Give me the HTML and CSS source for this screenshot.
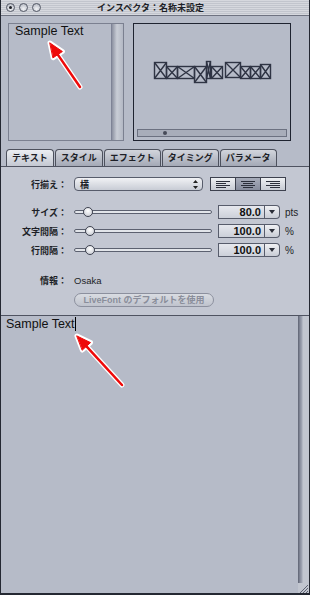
FILE: index.html
```html
<!DOCTYPE html>
<html lang="ja">
    <head>
        <meta charset="UTF-8">
        <meta name="viewport" content="width=device-width, initial-scale=1.0">
        <title>インスペクタ</title>

        <link rel="stylesheet" href="styles.css">
    </head>

    <body>
        <div class="window">
            <div class="titlebar">
                <div class="lights">
                    <span class="light dot"></span>
                    <span class="light"></span>
                    <span class="light"></span>
                </div>
                <div class="title">インスペクタ：名称未設定</div>
                <div></div>
            </div>

            <div class="top">
                <div class="sample">
                    <div class="sample-text">Sample Text</div>
                    <div class="vscroll"></div>
                </div>
                <div class="preview">
                    <svg class="glyphs" width="156" height="100" viewBox="0 0 156 100">
                        <g fill="none" stroke="#2f3444" stroke-width="1.4">
                            <rect x="20.5" y="38.5" width="12" height="16"/><path d="M20.5 38.5L32.5 54.5M32.5 38.5L20.5 54.5"/>
                            <rect x="32.5" y="42.5" width="11" height="12"/><path d="M32.5 42.5L43.5 54.5M43.5 42.5L32.5 54.5"/>
                            <rect x="43.5" y="42.5" width="17" height="12"/><path d="M43.5 42.5L60.5 54.5M60.5 42.5L43.5 54.5"/>
                            <rect x="60.5" y="42.5" width="12" height="16"/><path d="M60.5 42.5L72.5 58.5M72.5 42.5L60.5 58.5"/>
                            <rect x="72.5" y="37.5" width="4" height="17"/><path d="M72.5 37.5L76.5 54.5M76.5 37.5L72.5 54.5"/>
                            <rect x="77.5" y="42.5" width="11" height="12"/><path d="M77.5 42.5L88.5 54.5M88.5 42.5L77.5 54.5"/>
                            <rect x="91.5" y="38.5" width="15" height="15"/><path d="M91.5 38.5L106.5 53.5M106.5 38.5L91.5 53.5"/>
                            <rect x="106.5" y="42.5" width="10" height="12"/><path d="M106.5 42.5L116.5 54.5M116.5 42.5L106.5 54.5"/>
                            <rect x="116.5" y="42.5" width="10" height="12"/><path d="M116.5 42.5L126.5 54.5M126.5 42.5L116.5 54.5"/>
                            <rect x="126.5" y="40.5" width="10" height="14"/><path d="M126.5 40.5L136.5 54.5M136.5 40.5L126.5 54.5"/>
                        </g>
                    </svg>
                    <div class="hscroll"><span class="hdot"></span></div>
                </div>
            </div>

            <div class="tabs">
                <div class="tab active">テキスト</div>
                <div class="tab">スタイル</div>
                <div class="tab">エフェクト</div>
                <div class="tab">タイミング</div>
                <div class="tab">パラメータ</div>
            </div>

            <div class="panel">
                <div class="row first">
                    <div class="label">行揃え：</div>
                    <div class="popup">
                        <span>横</span>
                        <svg width="5" height="9" viewBox="0 0 5 9"><path d="M2.5 0L5 3H0Z M2.5 9L5 6H0Z" fill="#222"/></svg>
                    </div>
                    <div class="seg">
                        <div class="seg-btn">
                            <svg width="24" height="12" viewBox="0 0 24 12"><path d="M5 3.5H19M5 5.5H15M5 7.5H19M5 9.5H15" stroke="#2a2e3a"/></svg>
                        </div>
                        <div class="seg-btn on">
                            <svg width="24" height="12" viewBox="0 0 24 12"><path d="M5 3.5H19M7 5.5H17M5 7.5H19M7 9.5H17" stroke="#2a2e3a"/></svg>
                        </div>
                        <div class="seg-btn">
                            <svg width="24" height="12" viewBox="0 0 24 12"><path d="M5 3.5H19M9 5.5H19M5 7.5H19M9 9.5H19" stroke="#2a2e3a"/></svg>
                        </div>
                    </div>
                </div>

                <div class="row size">
                    <div class="label">サイズ：</div>
                    <div class="slider"><div class="track"></div><span class="knob k1"></span></div>
                    <div class="field">80.0</div>
                    <div class="dd"><svg width="6" height="4" viewBox="0 0 6 4"><path d="M0 0H6L3 4Z" fill="#2a2d38"/></svg></div>
                    <div class="unit">pts</div>
                </div>

                <div class="row next">
                    <div class="label">文字間隔：</div>
                    <div class="slider"><div class="track"></div><span class="knob k2"></span></div>
                    <div class="field">100.0</div>
                    <div class="dd"><svg width="6" height="4" viewBox="0 0 6 4"><path d="M0 0H6L3 4Z" fill="#2a2d38"/></svg></div>
                    <div class="unit">%</div>
                </div>

                <div class="row next">
                    <div class="label">行間隔：</div>
                    <div class="slider"><div class="track"></div><span class="knob k2"></span></div>
                    <div class="field">100.0</div>
                    <div class="dd"><svg width="6" height="4" viewBox="0 0 6 4"><path d="M0 0H6L3 4Z" fill="#2a2d38"/></svg></div>
                    <div class="unit">%</div>
                </div>

                <div class="row info">
                    <div class="label">情報：</div>
                    <div class="value">Osaka</div>
                </div>

                <div class="row btn-row">
                    <div class="label"></div>
                    <div class="btn">LiveFont のデフォルトを使用</div>
                </div>
            </div>

            <div class="editor">
                <div class="editor-text">Sample Text<span class="caret"></span></div>
                <div class="editor-scroll">
                    <div class="groove"></div>
                    <svg class="grip" width="11" height="10" viewBox="0 0 11 10">
                        <path d="M10 2L2 10M10 5L5 10M10 8L8 10" stroke="#5d6272" stroke-width="1"/>
                    </svg>
                </div>
            </div>

            <svg class="arrows" width="310" height="595" viewBox="0 0 310 595">
                <g stroke="#fff" stroke-width="5" stroke-linejoin="round" stroke-linecap="round" fill="#fff">
                    <path d="M80 87L57.8 54.6"/>
                    <path d="M50 43L62.4 51.5L53.2 57.7Z"/>
                    <path d="M122 385L86.5 346.3"/>
                    <path d="M77 336L90.5 342.6L82.4 350Z"/>
                </g>
                <g stroke="#ee0a0a" stroke-width="2.5" stroke-linecap="round" fill="#ee0a0a">
                    <path d="M80 87L57.8 54.6"/>
                    <path d="M50 43L62.4 51.5L53.2 57.7Z" stroke-width="1"/>
                    <path d="M122 385L86.5 346.3"/>
                    <path d="M77 336L90.5 342.6L82.4 350Z" stroke-width="1"/>
                </g>
            </svg>
        </div>
    </body>
</html>
```

FILE: styles.css
```css
body{
    margin: 0;
    background: #b6bbc8;
    font-family: "Liberation Sans", "Noto Sans CJK JP", sans-serif;
    color: #1c1e26;
}
.window{
    position: relative;
    width: 310px;
    height: 595px;
    box-sizing: border-box;
    border-left: 1px solid #242832;
    border-right: 1px solid #242832;
    border-bottom: 2px solid #242832;
    display: flex;
    flex-direction: column;
    background: #b6bbc8;
    overflow: hidden;
}

/* title bar */
.titlebar{
    height: 16px;
    box-sizing: border-box;
    border-bottom: 1px solid #6f7381;
    background: repeating-linear-gradient(#d6d8de 0, #d6d8de 1px, #c2c5cd 1px, #c2c5cd 2px);
    display: grid;
    grid-template-columns: 1fr auto 1fr;
    align-items: center;
    padding-right: 9px;
}
.lights{
    display: flex;
    gap: 4px;
    padding-left: 5px;
}
.light{
    width: 9px;
    height: 9px;
    box-sizing: border-box;
    border: 1px solid #555a67;
    border-radius: 50%;
    background: radial-gradient(circle at 50% 70%, #f2f3f6, #aeb2bd);
    display: flex;
    align-items: center;
    justify-content: center;
}
.light.dot::after{
    content: "";
    width: 3px;
    height: 3px;
    border-radius: 50%;
    background: #1d1f27;
}
.title{
    font-family: "Noto Sans CJK JP", sans-serif;
    font-weight: bold;
    font-size: 9px;
    line-height: 15px;
    color: #1d1f27;
}

/* top: sample + preview */
.top{
    height: 127px;
    box-sizing: border-box;
    padding: 7px 0 0 7px;
    display: flex;
    gap: 9px;
}
.sample{
    width: 116px;
    height: 118px;
    box-sizing: border-box;
    border: 1px solid #7b8090;
    display: flex;
}
.sample-text{
    flex: 1;
    padding-left: 6px;
    font-size: 12.5px;
    line-height: 14px;
    color: #111;
}
.vscroll{
    width: 11px;
    border-left: 1px solid #7e8396;
    background: linear-gradient(to right, #8c91a1, #c9cdd6 45%, #b3b8c4);
}
.preview{
    width: 158px;
    height: 118px;
    box-sizing: border-box;
    border: 1px solid #1f2330;
    display: flex;
    flex-direction: column;
}
.glyphs{
    display: block;
}
.hscroll{
    height: 8px;
    margin: 5px 3px 0;
    box-sizing: border-box;
    border: 1px solid #6c7181;
    background: #a8adba;
    display: flex;
    align-items: center;
    padding-left: 25px;
}
.hdot{
    width: 4px;
    height: 4px;
    border-radius: 50%;
    background: #474b59;
}

/* tabs */
.tabs{
    height: 24px;
    box-sizing: border-box;
    padding: 6px 0 0 5px;
    display: flex;
    gap: 1px;
    border-bottom: 1px solid #4f5361;
}
.tab{
    height: 17px;
    box-sizing: border-box;
    padding: 0 5px;
    border: 1px solid #4d515d;
    border-bottom: none;
    border-radius: 4px 4px 0 0;
    background: linear-gradient(#d2d5dc, #a4a9b6);
    font-family: "Noto Sans CJK JP", sans-serif;
    font-weight: bold;
    font-size: 9px;
    line-height: 16px;
    color: #1d1f27;
}
.tab.active{
    background: linear-gradient(#eceef2, #c4c8d2);
}

/* control panel */
.panel{
    height: 149px;
    box-sizing: border-box;
    padding-top: 10px;
    background: #c3c7d2;
    border-bottom: 1px solid #4f5361;
}
.row{
    display: flex;
    align-items: center;
    height: 14px;
}
.row.size{
    margin-top: 14px;
}
.row.next{
    margin-top: 5px;
}
.row.info{
    margin-top: 17px;
    height: 12px;
}
.row.btn-row{
    margin-top: 7px;
}
.label{
    width: 66px;
    margin-right: 7px;
    text-align: right;
    font-family: "Noto Sans CJK JP", sans-serif;
    font-weight: bold;
    font-size: 9px;
    color: #1d1f27;
    white-space: nowrap;
}
.popup{
    width: 129px;
    height: 14px;
    box-sizing: border-box;
    border: 1px solid #575c6b;
    border-radius: 4px;
    background: linear-gradient(#f1f2f5, #c8ccd5);
    display: flex;
    align-items: center;
    justify-content: space-between;
    padding: 0 4px 0 5px;
    font-family: "Noto Sans CJK JP", sans-serif;
    font-weight: bold;
    font-size: 9px;
}
.seg{
    margin-left: 7px;
    width: 76px;
    height: 14px;
    box-sizing: border-box;
    border: 1px solid #3d414e;
    display: flex;
}
.seg-btn{
    flex: 1;
    background: linear-gradient(#eef0f3, #c7cbd4);
    display: flex;
    align-items: center;
    justify-content: center;
}
.seg-btn + .seg-btn{
    border-left: 1px solid #3d414e;
}
.seg-btn.on{
    background: linear-gradient(#a7acba, #868c9d);
}
.slider{
    position: relative;
    width: 138px;
    height: 14px;
    display: flex;
    align-items: center;
}
.track{
    width: 100%;
    height: 4px;
    box-sizing: border-box;
    border: 1px solid #5c6170;
    border-radius: 3px;
    background: #e2e5ea;
}
.knob{
    position: absolute;
    top: 2px;
    width: 10px;
    height: 10px;
    box-sizing: border-box;
    border: 1px solid #3f4350;
    border-radius: 50%;
    background: radial-gradient(circle at 50% 35%, #ffffff, #c3c7d0);
}
.knob.k1{
    left: 9px;
}
.knob.k2{
    left: 11px;
}
.field{
    margin-left: 6px;
    width: 47px;
    height: 14px;
    box-sizing: border-box;
    border: 1px solid #575c6b;
    background: linear-gradient(#e6e8ee, #ccd0d9);
    text-align: right;
    padding-right: 3px;
    font-weight: bold;
    font-size: 11px;
    line-height: 12px;
    color: #111;
}
.dd{
    width: 15px;
    height: 14px;
    box-sizing: border-box;
    border: 1px solid #575c6b;
    border-left: none;
    border-radius: 0 4px 4px 0;
    background: linear-gradient(#f0f1f4, #c8ccd5);
    display: flex;
    align-items: center;
    justify-content: center;
}
.unit{
    margin-left: 5px;
    font-size: 10px;
    color: #1d1f27;
}
.value{
    font-size: 9.5px;
    color: #1d1f27;
}
.btn{
    width: 140px;
    height: 14px;
    box-sizing: border-box;
    border: 1px solid #8c909e;
    border-radius: 7px;
    background: linear-gradient(#d9dce2, #bfc3cd);
    text-align: center;
    font-family: "Liberation Sans", "Noto Sans CJK JP", sans-serif;
    font-weight: bold;
    font-size: 9px;
    line-height: 12px;
    color: #8a8e9b;
}

/* editor */
.editor{
    flex: 1;
    display: flex;
    background: #b6bbc8;
}
.editor-text{
    flex: 1;
    padding: 1px 0 0 5px;
    font-size: 12.5px;
    line-height: 14px;
    color: #111;
}
.caret{
    display: inline-block;
    width: 1px;
    height: 14px;
    background: #000;
    vertical-align: -3px;
}
.editor-scroll{
    width: 11px;
    display: flex;
    flex-direction: column;
    background: #c1c5cf;
}
.groove{
    flex: 1;
    background: linear-gradient(to right, #5d6272 0, #868b9b 2px, #a2a7b5 4px, #c1c5cf 5px, #c1c5cf);
}
.grip{
    display: block;
}
.arrows{
    position: absolute;
    left: -1px;
    top: 0;
    pointer-events: none;
}
```
